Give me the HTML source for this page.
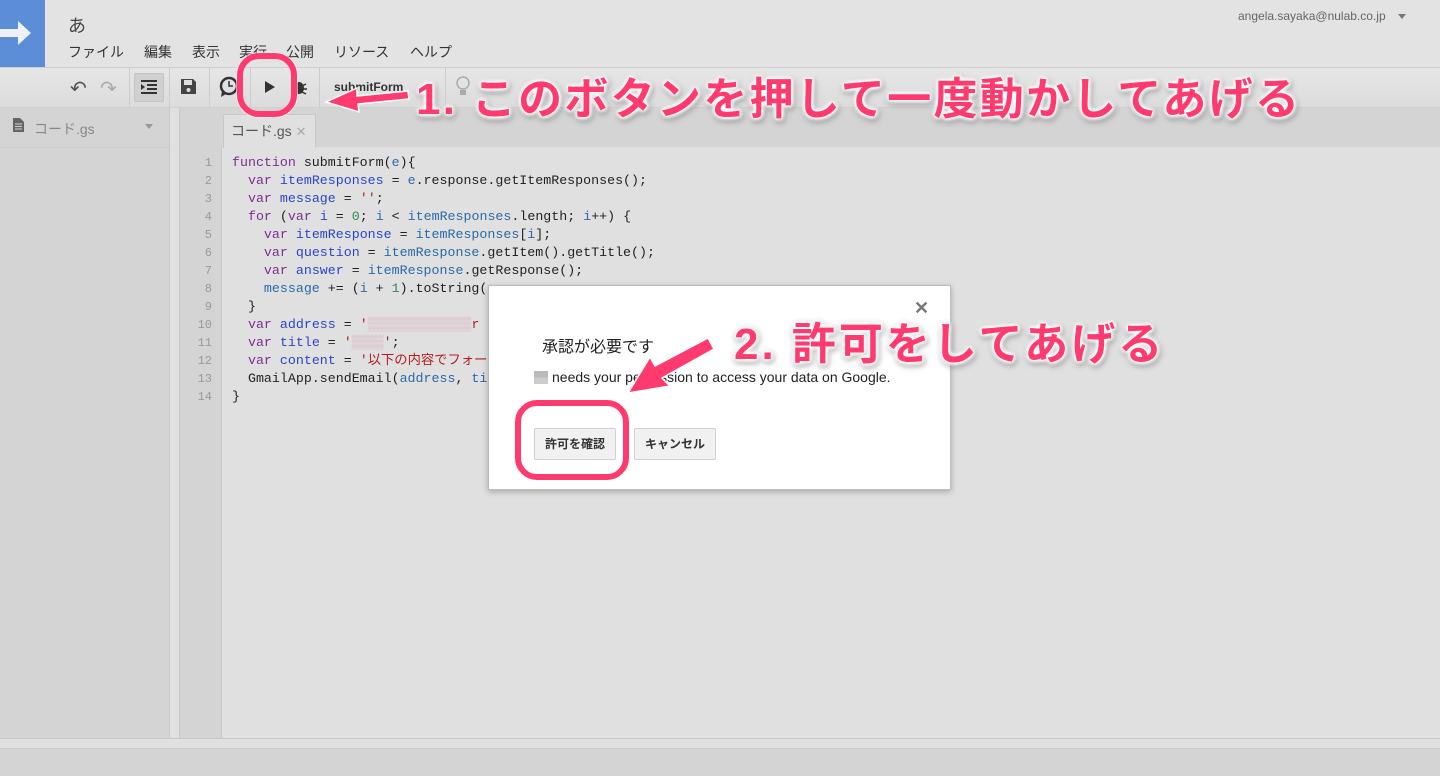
<!DOCTYPE html>
<html><head><meta charset="utf-8"><style>
*{margin:0;padding:0;box-sizing:border-box}
body{width:1440px;height:776px;overflow:hidden;background:#e0e0e0;font-family:"Liberation Sans","Noto Sans CJK JP",sans-serif;position:relative}
.a{position:absolute}
.code{font-family:"Liberation Mono","Noto Sans CJK JP",monospace;font-size:13.3px;color:#222;white-space:pre;line-height:18px}
.k{color:#7a2f8f}.v{color:#2a46c8}.p{color:#2a6aa8}.s{color:#b02020}.n{color:#2a8a5a}
.ln{font-family:"Liberation Mono",monospace;font-size:12px;color:#999;text-align:right;width:32px;line-height:18px;white-space:pre}
.ann{font-weight:bold;color:#ff3a6e;font-size:44px;white-space:nowrap;letter-spacing:1px;filter:drop-shadow(0 0 2px #fff) drop-shadow(0 0 2px #fff) drop-shadow(0 0 1px #fff) drop-shadow(1px 2px 2px rgba(0,0,0,.35))}
.btn{position:absolute;background:#f1f1f1;border:1px solid #d0d0d0;border-radius:2px;font-size:12px;font-weight:bold;color:#333;text-align:center;line-height:30px;height:32px}
.m{position:absolute;top:42px;font-size:14px;color:#333}
</style></head><body>
<div class="a" style="left:0;top:0;width:1440px;height:67px;background:#e3e3e3"></div>
<div class="a" style="left:0;top:0;width:45px;height:67px;background:#5b8ed6"></div>
<svg class="a" style="left:0;top:18px" width="34" height="30" viewBox="0 0 34 30"><path d="M0 11h18V3l13 12-13 12v-8H0z" fill="#eef2f8"/></svg>
<div class="a" style="left:68px;top:12px;font-size:18px;color:#444">あ</div>
<div class="m" style="left:68px">ファイル</div><div class="m" style="left:144px">編集</div><div class="m" style="left:192px">表示</div><div class="m" style="left:239px">実行</div><div class="m" style="left:286px">公開</div><div class="m" style="left:334px">リソース</div><div class="m" style="left:410px">ヘルプ</div>
<div class="a" style="left:1238px;top:9px;font-size:12px;color:#666">angela.sayaka@nulab.co.jp</div>
<div class="a" style="left:1398px;top:14px;width:0;height:0;border-left:4px solid transparent;border-right:4px solid transparent;border-top:5px solid #777"></div>
<div class="a" style="left:0;top:67px;width:1440px;height:41px;background:linear-gradient(#e6e6e6,#dcdcdc);border-top:1px solid #cfcfcf;border-bottom:1px solid #cfcfcf"></div>
<div class="a" style="left:70px;top:76px;font-size:20px;color:#555">↶</div>
<div class="a" style="left:100px;top:76px;font-size:20px;color:#aaa">↷</div>
<div class="a" style="left:129px;top:68px;width:1px;height:40px;background:#ccc"></div>
<div class="a" style="left:134px;top:73px;width:30px;height:29px;background:#d0d0d0;border:1px solid #c4c4c4;border-radius:2px"></div>
<svg class="a" style="left:139px;top:79px" width="20" height="16"><g fill="#333"><rect x="2" y="1" width="16" height="2"/><rect x="8" y="5" width="10" height="2"/><rect x="8" y="9" width="10" height="2"/><rect x="2" y="13" width="16" height="2"/><path d="M2 5l4 3-4 3z"/></g></svg>
<div class="a" style="left:169px;top:68px;width:1px;height:40px;background:#ccc"></div>
<svg class="a" style="left:180px;top:78px" width="17" height="17"><path d="M1 1h12l3 3v12H1z" fill="#444"/><rect x="4" y="2" width="8" height="5" fill="#ddd"/><circle cx="8.5" cy="12" r="2" fill="#ddd"/></svg>
<div class="a" style="left:209px;top:68px;width:1px;height:40px;background:#ccc"></div>
<svg class="a" style="left:219px;top:76px" width="20" height="22"><circle cx="10" cy="10" r="8" fill="none" stroke="#333" stroke-width="2.5"/><path d="M10 5v5h4" fill="none" stroke="#333" stroke-width="1.5"/><path d="M3 15l-1 6 5-3z" fill="#333"/></svg>
<div class="a" style="left:250px;top:68px;width:1px;height:40px;background:#ccc"></div>
<svg class="a" style="left:264px;top:80px" width="12" height="14"><path d="M1 1l10 6-10 6z" fill="#333"/></svg>
<svg class="a" style="left:290px;top:78px" width="18" height="18"><ellipse cx="9" cy="10" rx="5" ry="6" fill="#333"/><path d="M2 6l4 2M16 6l-4 2M1 11h4M17 11h-4M2 16l4-2M16 16l-4-2" stroke="#333" stroke-width="1.5"/></svg>
<div class="a" style="left:319px;top:68px;width:1px;height:40px;background:#ccc"></div>
<div class="a" style="left:334px;top:80px;font-size:12px;font-weight:bold;color:#333">submitForm</div>
<div class="a" style="left:445px;top:68px;width:1px;height:40px;background:#ccc"></div>
<svg class="a" style="left:455px;top:74px" width="16" height="26"><circle cx="8" cy="9" r="6" fill="none" stroke="#aaa" stroke-width="1.5"/><rect x="5" y="16" width="6" height="5" fill="#aaa"/></svg>
<div class="a" style="left:0;top:108px;width:169px;height:630px;background:#d4d4d4"></div>
<div class="a" style="left:0;top:147px;width:169px;height:1px;background:#c8c8c8"></div>
<svg class="a" style="left:13px;top:118px" width="11" height="14"><path d="M0 0h7l4 4v10H0z" fill="#666"/><path d="M2 6h7M2 8.5h7M2 11h7" stroke="#d4d4d4"/></svg>
<div class="a" style="left:34px;top:119px;font-size:14px;color:#888">コード.gs</div>
<div class="a" style="left:145px;top:124px;border-left:4px solid transparent;border-right:4px solid transparent;border-top:5px solid #999"></div>
<div class="a" style="left:169px;top:108px;width:11px;height:630px;background:#e0e0e0;border-left:1px solid #c8c8c8;border-right:1px solid #c8c8c8"></div>
<div class="a" style="left:180px;top:108px;width:1260px;height:39px;background:#d4d4d4"></div>
<div class="a" style="left:223px;top:114px;width:93px;height:34px;background:#e0e0e0;border:1px solid #c8c8c8;border-bottom:none"></div>
<div class="a" style="left:231px;top:121px;font-size:14px;color:#555">コード.gs <span style="color:#aaa;font-size:13px">✕</span></div>
<div class="a" style="left:180px;top:147px;width:42px;height:591px;background:#d4d4d4;border-right:1px solid #c8c8c8"></div>
<div class="a ln" style="left:180px;top:154px">1
2
3
4
5
6
7
8
9
10
11
12
13
14</div>
<div class="a code" style="left:232px;top:154px"><span class="k">function</span> submitForm(<span class="p">e</span>){
  <span class="k">var</span> <span class="v">itemResponses</span> = <span class="p">e</span>.response.getItemResponses();
  <span class="k">var</span> <span class="v">message</span> = <span class="s">''</span>;
  <span class="k">for</span> (<span class="k">var</span> <span class="v">i</span> = <span class="n">0</span>; <span class="p">i</span> &lt; <span class="p">itemResponses</span>.length; <span class="p">i</span>++) {
    <span class="k">var</span> <span class="v">itemResponse</span> = <span class="p">itemResponses</span>[<span class="p">i</span>];
    <span class="k">var</span> <span class="v">question</span> = <span class="p">itemResponse</span>.getItem().getTitle();
    <span class="k">var</span> <span class="v">answer</span> = <span class="p">itemResponse</span>.getResponse();
    <span class="p">message</span> += (<span class="p">i</span> + <span class="n">1</span>).toString(
  }
  <span class="k">var</span> <span class="v">address</span> = <span class="s">'<span style="color:#d8a8b8">▒▒▒▒▒▒▒▒▒▒▒▒▒</span>r</span>
  <span class="k">var</span> <span class="v">title</span> = <span class="s">'<span style="color:#d8a8b8">▒▒▒▒</span>'</span>;
  <span class="k">var</span> <span class="v">content</span> = <span class="s">'以下の内容でフォー</span>
  GmailApp.sendEmail(<span class="p">address</span>, <span class="p">ti</span>
}</div>
<div class="a" style="left:0;top:738px;width:1440px;height:11px;background:#e0e0e0;border-top:1px solid #c8c8c8;border-bottom:1px solid #c8c8c8"></div>
<div class="a" style="left:0;top:749px;width:1440px;height:27px;background:#d4d4d4"></div>
<div class="a" style="left:488px;top:285px;width:463px;height:205px;background:#fff;border:1px solid #bbb;box-shadow:0 2px 6px rgba(0,0,0,.25)"></div>
<div class="a" style="left:914px;top:298px;font-size:18px;color:#777;font-weight:bold">✕</div>
<div class="a" style="left:542px;top:333px;font-size:16px;color:#222">承認が必要です</div>
<div class="a" style="left:534px;top:371px;width:14px;height:13px;background:linear-gradient(#bbb 50%,#ccc 50%)"></div>
<div class="a" style="left:552px;top:369px;font-size:14px;color:#222">needs your permission to access your data on Google.</div>
<div class="btn" style="left:534px;top:428px;width:82px">許可を確認</div>
<div class="btn" style="left:634px;top:428px;width:82px">キャンセル</div>
<div class="a" style="left:237px;top:53px;width:60px;height:64px;border:6px solid #ff3a6e;border-radius:22px;box-shadow:0 0 0 1px rgba(255,255,255,.6)"></div>
<div class="a" style="left:515px;top:400px;width:114px;height:80px;border:6px solid #ff3a6e;border-radius:22px"></div>
<svg class="a" style="left:0;top:0" width="1440" height="776"><g fill="#ff3a6e" stroke="#fff" stroke-width="1.5">
<path d="M408 91 L357 96 L357 88 L326 102 L359 112 L358 104 L409 99 Z"/>
<path d="M708 338 L655 366 L650 357 L628 393 L670 386 L662 378 L714 349 Z"/></g></svg>
<div class="a ann" style="left:416px;top:63px;letter-spacing:2.3px">1. このボタンを押して一度動かしてあげる</div>
<div class="a ann" style="left:734px;top:308px;letter-spacing:3px">2. 許可をしてあげる</div>
</body></html>
